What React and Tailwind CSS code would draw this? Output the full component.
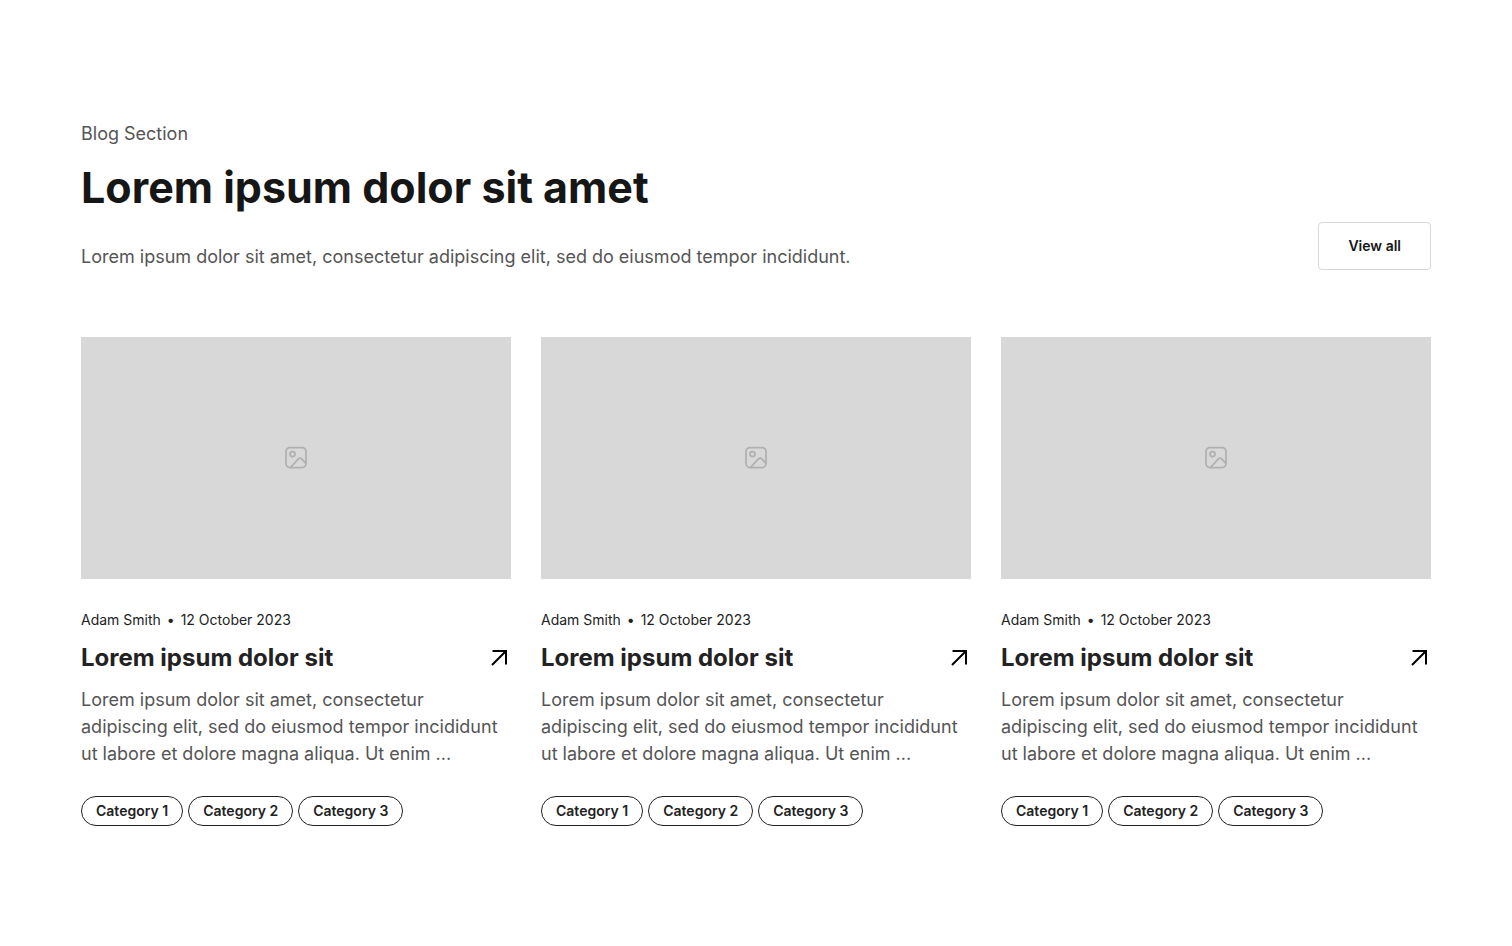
const posts = [1, 2, 3].map((id) => ({
  id,
  author: "Adam Smith",
  date: "12 October 2023",
  title: "Lorem ipsum dolor sit",
  excerpt:
    "Lorem ipsum dolor sit amet, consectetur adipiscing elit, sed do eiusmod tempor incididunt ut labore et dolore magna aliqua. Ut enim ...",
  categories: ["Category 1", "Category 2", "Category 3"],
}));

function ImageIcon() {
  return (
    <svg width="24" height="24" viewBox="0 0 24 24" fill="none" stroke="#b0b0b0" strokeWidth="1.75" strokeLinecap="round" strokeLinejoin="round" aria-hidden="true">
      <rect x="2" y="1.5" width="20" height="20" rx="4" />
      <circle cx="8.5" cy="8" r="2.5" />
      <path d="M6.5 21.5 14.6 12.7a2 2 0 0 1 2.9 0L22 17.3" />
    </svg>
  );
}

function ArrowIcon() {
  return (
    <svg width="24" height="24" viewBox="0 0 24 24" fill="none" stroke="currentColor" strokeWidth="2" aria-hidden="true">
      <path d="M5 19 18.5 5.5M5.5 5H19v13.5" />
    </svg>
  );
}

function PostCard({ post }) {
  return (
    <article>
      <div className="flex h-[242px] items-center justify-center bg-[#d8d8d8]">
        <ImageIcon />
      </div>

      <p className="mt-[31px] flex items-center gap-1.5 text-sm leading-5 text-[#222222]">
        <span>{post.author}</span>
        <span>•</span>
        <span>{post.date}</span>
      </p>

      <a href="#" className="mt-3 flex items-center justify-between text-[#222222]">
        <h3 className="text-2xl leading-8 font-bold">{post.title}</h3>
        <span className="text-black">
          <ArrowIcon />
        </span>
      </a>

      <p className="mt-3 text-lg leading-[27px] text-[#555555]">{post.excerpt}</p>

      <div className="mt-[29px] flex flex-wrap gap-[5px]">
        {post.categories.map((category) => (
          <a key={category} href="#" className="rounded-full border border-[#222222] px-3.5 py-1 text-sm leading-5 font-semibold text-[#222222]">
            {category}
          </a>
        ))}
      </div>
    </article>
  );
}

export default function App() {
  return (
    <section className="min-h-screen bg-white px-[81px] py-30 font-['Inter',sans-serif]">
      <header className="flex items-end justify-between">
        <div>
          <p className="text-lg leading-[27px] text-[#555555]">Blog Section</p>
          <h2 className="mt-3 text-[43px] leading-14 font-bold text-[#161616]">Lorem ipsum dolor sit amet</h2>
          <p className="mt-7 text-lg leading-[27px] text-[#555555]">
            Lorem ipsum dolor sit amet, consectetur adipiscing elit, sed do eiusmod tempor incididunt.
          </p>
        </div>
        <button type="button" className="h-12 shrink-0 rounded border border-[#d8d8d8] px-[29px] text-sm font-semibold text-[#161616]">
          View all
        </button>
      </header>

      <div className="mt-[67px] grid grid-cols-3 gap-[30px]">
        {posts.map((post) => (
          <PostCard key={post.id} post={post} />
        ))}
      </div>
    </section>
  );
}
